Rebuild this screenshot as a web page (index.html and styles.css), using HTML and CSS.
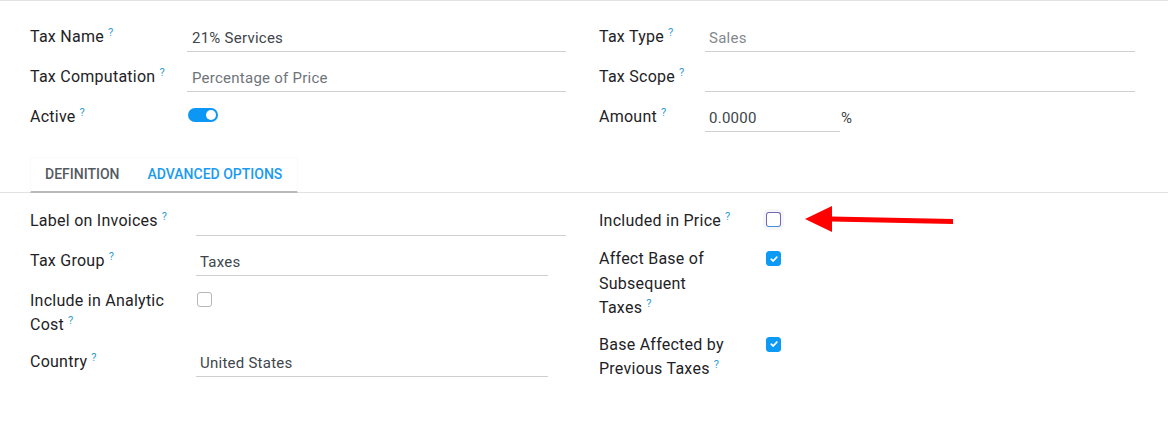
FILE: index.html
```html
<!DOCTYPE html>
<html>
<head>
<meta charset="utf-8">
<link rel="stylesheet" href="styles.css">
</head>
<body>
<div class="sheet">
  <div class="grid2 top">
    <div class="group g1">
      <div class="row"><div class="label">Tax Name<sup>?</sup></div><div class="field w-full">21% Services</div></div>
      <div class="row"><div class="label">Tax Computation<sup>?</sup></div><div class="field w-full muted">Percentage of Price</div></div>
      <div class="row"><div class="label">Active<sup>?</sup></div><div class="field plain"><span class="toggle"><span class="knob"></span></span></div></div>
    </div>
    <div class="group g2">
      <div class="row"><div class="label">Tax Type<sup>?</sup></div><div class="field w-full light">Sales</div></div>
      <div class="row"><div class="label">Tax Scope<sup>?</sup></div><div class="field w-full"></div></div>
      <div class="row"><div class="label">Amount<sup>?</sup></div><div class="field w-amount">0.0000</div><span class="unit">%</span></div>
    </div>
  </div>

  <div class="tabs">
    <div class="tab-group">
      <span class="tab">Definition</span>
      <span class="tab active">Advanced Options</span>
    </div>
  </div>

  <div class="grid2 bottom">
    <div class="group g3">
      <div class="row"><div class="label">Label on Invoices<sup>?</sup></div><div class="field w-full"></div></div>
      <div class="row"><div class="label">Tax Group<sup>?</sup></div><div class="field w-m2o">Taxes</div></div>
      <div class="row"><div class="label">Include in Analytic<br>Cost<sup>?</sup></div><div class="field plain"><span class="check"></span></div></div>
      <div class="row"><div class="label">Country<sup>?</sup></div><div class="field w-m2o">United States</div></div>
    </div>
    <div class="group g4">
      <div class="row"><div class="label">Included in Price<sup>?</sup></div><div class="field plain first"><span class="check focus"></span></div></div>
      <div class="row"><div class="label tall">Affect Base of<br>Subsequent<br>Taxes<sup>?</sup></div><div class="field plain"><span class="check on"><svg viewBox="0 0 10 10" width="10" height="10"><path d="M2.2 5.2 L4.2 7 L7.8 3.2" fill="none" stroke="#fff" stroke-width="1.7" stroke-linecap="round" stroke-linejoin="round"/></svg></span></div></div>
      <div class="row"><div class="label tall">Base Affected by<br>Previous Taxes<sup>?</sup></div><div class="field plain"><span class="check on"><svg viewBox="0 0 10 10" width="10" height="10"><path d="M2.2 5.2 L4.2 7 L7.8 3.2" fill="none" stroke="#fff" stroke-width="1.7" stroke-linecap="round" stroke-linejoin="round"/></svg></span></div></div>
    </div>
  </div>

  <svg class="arrow" width="160" height="40" viewBox="0 0 160 40">
    <polygon points="5,19 32,6 32,32" fill="#ff0000"/>
    <polygon points="31,16.5 153,19 153,24 31,21.5" fill="#ff0000"/>
  </svg>
</div>
</body>
</html>
```

FILE: styles.css
```css
* { box-sizing: border-box; }
html, body { margin: 0; padding: 0; background: #fff; }
body {
  font-family: Roboto, "Noto Sans", sans-serif;
  font-size: 15px;
  color: #212529;
}
.sheet {
  position: relative;
  width: 1168px;
  height: 431px;
  border-top: 1px solid #e2e2e4;
}
.grid2 {
  display: grid;
  grid-template-columns: 536px 536px;
  column-gap: 33px;
  padding: 0 33px 0 30px;
}
.top { padding-top: 23px; }
.bottom { padding-top: 15px; }

.group { display: flex; flex-direction: column; gap: 12px; }
.row { display: flex; align-items: flex-start; }
.label {
  font-size: 16px;
  letter-spacing: 0.25px;
  line-height: 24px;
  padding-top: 1px;
  white-space: nowrap;
  flex: none;
  color: #1e2226;
}
.label sup {
  font-size: 11px;
  letter-spacing: 0;
  color: #2b9bd3;
  margin-left: 4px;
  vertical-align: 6px;
  line-height: 0;
}
.g1 .label { width: 157px; }
.g2 .label { width: 106px; }
.g3 .label { width: 166px; }
.g4 .label { width: 167px; }
.g4 { gap: 10px; }
.g4 .label.tall { line-height: 24.5px; }
.g4 .row + .row + .row { margin-top: 1px; }

.field {
  height: 28px;
  border-bottom: 1px solid #cfcfd1;
  padding: 2px 5px 0;
  line-height: 24px;
  letter-spacing: 0.25px;
  color: #40454b;
  white-space: nowrap;
}
.g3 .field { padding-left: 4px; }
.g2 .field { padding-left: 4px; }
.field.plain { border-bottom: 0; padding: 4px 0 0 1px; }
.g4 .field.plain { padding: 5px 0 0 0; }
.g4 .field.plain.first { padding-top: 4px; }
.w-full { flex: 1; }
.w-m2o { width: 352px; }
.w-amount { width: 135px; }
.muted { color: #6f747a; }
.light { color: #84888d; }
.unit { line-height: 24px; padding-top: 2px; margin-left: 1px; color: #40454b; }

.toggle {
  display: block;
  width: 30px;
  height: 14px;
  border-radius: 7px;
  background: #0b97f3;
  position: relative;
}
.knob {
  position: absolute;
  right: 2px;
  top: 2px;
  width: 10px;
  height: 10px;
  border-radius: 50%;
  background: #fff;
}

.check {
  display: flex;
  align-items: center;
  justify-content: center;
  width: 15px;
  height: 15px;
  border: 1px solid #b3b7bc;
  border-radius: 3px;
  background: #fff;
}
.check.focus {
  border-color: #7267b3;
  border-bottom-color: #3b8fdc;
  box-shadow: 0 0 0 3px #f6f6f9;
}
.check.on {
  background: #0c9af4;
  border-color: #0c9af4;
}

.tabs {
  margin-top: 25px;
  border-bottom: 1px solid #e1e1e3;
  height: 36px;
}
.tab-group {
  display: flex;
  margin-left: 30px;
  width: 268px;
  height: 36px;
  border-bottom: 2px solid #b9b9bb;
  border-top: 1px solid #fbfbfb;
  border-left: 1px solid #fbfbfb;
  border-right: 1px solid #fbfbfb;
}
.tab {
  font-size: 14px;
  font-weight: 500;
  text-transform: uppercase;
  line-height: 33px;
  padding: 0 14px;
  color: #555a5f;
}
.tab.active { color: #1a9bf0; }

.arrow {
  position: absolute;
  left: 800px;
  top: 199px;
}
```
